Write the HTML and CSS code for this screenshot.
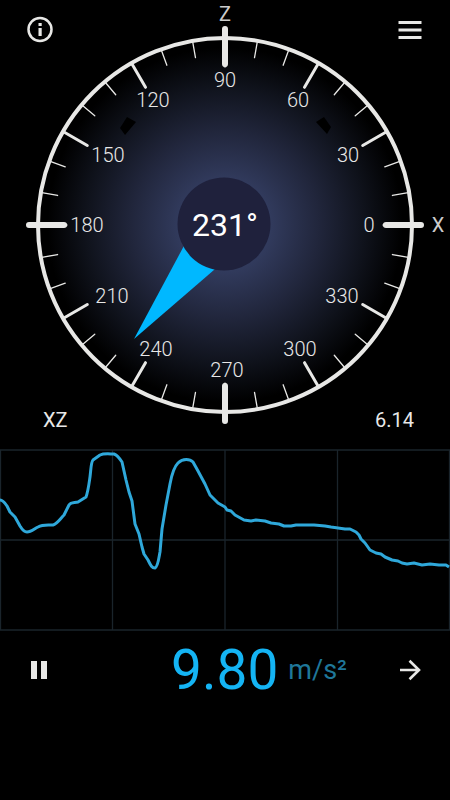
FILE: index.html
```html
<!DOCTYPE html>
<html lang="en">
<head>
    <meta charset="UTF-8">
    <meta name="viewport" content="width=device-width, initial-scale=1">
    <title>Accelerometer</title>
    <link rel="stylesheet" href="styles.css">
</head>
<body>

<main class="app">
    <!-- DIAL -->
    <section class="dial-section">
        <svg class="dial" viewBox="0 0 450 449" role="img" aria-label="Direction dial">
            <defs>
                <radialGradient id="glow" gradientUnits="userSpaceOnUse" cx="225" cy="225" r="187">
                    <stop offset="0" stop-color="#384369"/>
                    <stop offset="0.25" stop-color="#313a5c"/>
                    <stop offset="0.5" stop-color="#21263c"/>
                    <stop offset="0.75" stop-color="#0f121b"/>
                    <stop offset="0.95" stop-color="#000"/>
                </radialGradient>
                <!-- 30 degrees of the scale -->
                <g id="sector">
                    <path class="tick-major" d="M159 0H186"/>
                    <path class="tick-minor" d="M170 0H186" transform="rotate(10)"/>
                    <path class="tick-minor" d="M170 0H186" transform="rotate(20)"/>
                </g>
            </defs>

            <circle class="ring" cx="225" cy="225" r="187" fill="url(#glow)"/>
            <path d="M127 117L136 122L125 135L120 128Z"/>
            <path d="M324 117L331 127L327 134L316 122Z"/>

            <g transform="translate(225 225)">
                <use href="#sector"/>
                <use href="#sector" transform="rotate(30)"/>
                <use href="#sector" transform="rotate(60)"/>
                <use href="#sector" transform="rotate(90)"/>
                <use href="#sector" transform="rotate(120)"/>
                <use href="#sector" transform="rotate(150)"/>
                <use href="#sector" transform="rotate(180)"/>
                <use href="#sector" transform="rotate(210)"/>
                <use href="#sector" transform="rotate(240)"/>
                <use href="#sector" transform="rotate(270)"/>
                <use href="#sector" transform="rotate(300)"/>
                <use href="#sector" transform="rotate(330)"/>
                <path class="tick-axis" d="M161 0H196M-161 0H-196M0 161V196M0-161V-196"/>
            </g>

            <g class="scale">
                <text x="225" y="87">90</text>
                <text x="298" y="107">60</text>
                <text x="348" y="162">30</text>
                <text x="369" y="232">0</text>
                <text x="342" y="303">330</text>
                <text x="300" y="356">300</text>
                <text x="227" y="377">270</text>
                <text x="156" y="356">240</text>
                <text x="112" y="303">210</text>
                <text x="87" y="232">180</text>
                <text x="108" y="162">150</text>
                <text x="153" y="107">120</text>
            </g>
            <g class="axis">
                <text x="225" y="21">Z</text>
                <text x="438" y="232">X</text>
            </g>

            <path class="needle" d="M134 339L193 229L229 257Z"/>
            <circle class="hub" cx="224" cy="224" r="46.500"/>
            <text class="angle" x="225" y="236">231°</text>
        </svg>

        <button class="icon-button info" type="button" aria-label="Info">
            <svg viewBox="0 0 32 32" width="32" height="32">
                <circle cx="16" cy="15.500" r="11.500" fill="none" stroke="currentColor" stroke-width="2.500"/>
                <path d="M14.500 9h3.200v3h-3.200zM14.500 14h3.200v8h-3.200z" fill="currentColor"/>
            </svg>
        </button>
        <button class="icon-button menu" type="button" aria-label="Menu">
            <svg viewBox="0 0 32 32" width="32" height="32">
                <path d="M4.500 7h23v3h-23zM4.500 14.500h23v3h-23zM4.500 22h23v3h-23z" fill="currentColor"/>
            </svg>
        </button>
        <span class="plane">XZ</span>
        <span class="value">6.14</span>
    </section>

    <!-- GRAPH -->
    <svg class="graph" viewBox="0 0 450 182" role="img" aria-label="Acceleration over time">
        <path class="grid-line" d="M0 1H450M0 91H450M0 181H450M.5 1V181M112.500 1V181M225 1V181M337.500 1V181M449.500 1V181"/>
        <path class="trace" d="M0 51C3 51 5 54 7 57L10 63L15 68L20 77C23 82 25 83 27 83C31 83 34 80 38 78C43 75 49 76 53 76C57 75 60 70 64 66L69 56C71 53 74 54 78 53L86 48C88 43 89 35 90 28C91 20 91 13 93 11L100 6C104 4 110 5 114 5C117 6 120 10 122 13L126 31L129 43L132 52L135 75L139 85L142 98L144 105L148 111C151 117 152 119 155 119C158 118 159 108 160 103L162 80L166 56L170 35C172 24 174 18 178 14C183 9 190 10 193 13L198 22L205 35L210 46L218 54L225 58L227 61L231 62L235 66L244 71L251 72L256 71L265 72L271 74L279 75L284 77L291 77L296 76L303 76L314 76L325 77L331 78L338 79L345 80L350 80L356 83L359 86L361 90L365 94L370 101L376 104L381 105L385 108L392 111L398 112L402 114L407 115L414 114L422 116L430 115L439 116L446 116L449 118"/>
    </svg>

    <!-- READOUT -->
    <section class="readout">
        <button class="icon-button" type="button" aria-label="Pause">
            <svg viewBox="0 0 32 32" width="32" height="32">
                <path d="M7 7h6v18h-6zM17 7h6v18h-6z" fill="currentColor"/>
            </svg>
        </button>
        <p class="acceleration">
            <span class="number">9.80</span>
            <span class="unit">m/s²</span>
        </p>
        <button class="icon-button" type="button" aria-label="Next">
            <svg viewBox="0 0 32 32" width="32" height="32">
                <path d="M6 16H25M15.500 6.700L25 16L15.500 25.300" fill="none" stroke="currentColor" stroke-width="2.600"/>
            </svg>
        </button>
    </section>
</main>

</body>
</html>
```

FILE: styles.css
```css
body {
    margin: 0;
    background-color: black;
    color: #e8e8e8;
    font-family: Roboto, "Liberation Sans", sans-serif;
}

.app {
    display: flex;
    flex-direction: column;
}

/* the dial fills the section, the controls sit in its corners */
.dial-section {
    display: grid;
    grid-template-columns: 1fr 1fr;
    grid-template-rows: auto 1fr auto;
}

.dial {
    grid-area: 1 / 1 / 4 / 3;
    display: block;
    width: 100%;
}

.ring {
    stroke: #e8e8e6;
    stroke-width: 4;
}

.tick-major,
.tick-minor,
.tick-axis {
    stroke: #e8e8e6;
    stroke-linecap: round;
}

.tick-major {
    stroke-width: 3;
}

.tick-minor {
    stroke-width: 1.3;
}

.tick-axis {
    stroke-width: 6;
}

.scale,
.axis,
.angle {
    fill: #e8e8e8;
    font-size: 20px;
    text-anchor: middle;
}

.scale {
    font-weight: 300;
}

.axis {
    fill: #cccccc;
}

.needle {
    fill: #00b8ff;
}

.hub {
    fill: #1f213c;
}

.angle {
    fill: white;
    font-size: 32px;
}

.icon-button {
    display: flex;
    padding: 0;
    border: none;
    background: none;
    color: #e8e8e6;
    cursor: pointer;
}

.info {
    grid-area: 1 / 1;
    justify-self: start;
    margin: 14px 24px;
}

.menu {
    grid-area: 1 / 2;
    justify-self: end;
    margin: 14px 24px;
}

.plane,
.value {
    font-size: 20px;
    line-height: 24px;
    margin: 0 36px 17px 43px;
}

.plane {
    grid-area: 3 / 1;
    justify-self: start;
}

.value {
    grid-area: 3 / 2;
    justify-self: end;
}

.graph {
    display: block;
    width: 100%;
}

.grid-line {
    fill: none;
    stroke: #1a242b;
    stroke-width: 1.3;
}

.trace {
    fill: none;
    stroke: #2fa8da;
    stroke-width: 3;
    stroke-linejoin: round;
}

.readout {
    display: flex;
    align-items: center;
    justify-content: space-between;
    padding: 7px 24px;
}

.acceleration {
    display: flex;
    align-items: center;
    gap: 10px;
    margin: 0 47px 0 auto;
}

.number {
    color: #14b4f4;
    font-size: 55px;
    line-height: 64px;
}

.unit {
    color: #1f7799;
    font-size: 27px;
    line-height: 32px;
}
```
